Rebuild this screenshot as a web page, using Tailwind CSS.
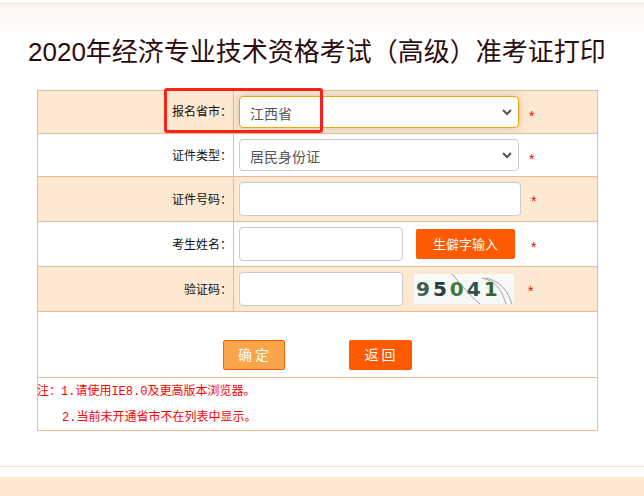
<!DOCTYPE html>
<html lang="zh">
<head>
<meta charset="utf-8">
<script src="https://cdn.jsdelivr.net/npm/@tailwindcss/browser@4"></script>
</head>
<body class="h-[496px] w-[644px] overflow-hidden bg-white font-['Liberation_Sans','Noto_Sans_CJK_SC',sans-serif]">
<div class="h-[34px] border-t border-[#fbe0cc] mt-[3px] bg-gradient-to-b from-[#fff5ee] to-white"></div>
<h1 class="ml-[28px] h-[53px] text-[26px] leading-[30px] whitespace-nowrap text-[#2e0c0c]">2020年经济专业技术资格考试（高级）准考证打印</h1>
<div class="relative ml-[37px] w-[561px] border border-[#efb88e] text-[12px] text-[#111]">
  <div class="flex h-[43px] border-b border-[#efb88e] bg-[#fde9d2]">
    <div class="flex w-[196px] items-center justify-end border-r border-[#efb88e] pr-[1px]">报名省市：</div>
    <div class="flex flex-1 items-center pl-[5px]">
      <div class="flex h-[32px] w-[280px] items-center justify-between rounded-[4px] border border-[#f5a30a] bg-white pl-[10px] pr-[6px] text-[14px] text-[#555] shadow-[0_0_8px_rgba(120,120,120,0.35)]"><span class="mt-[4px]">江西省</span>
        <svg width="10" height="7" viewBox="0 0 10 7"><path d="M1 1l4 4 4-4" fill="none" stroke="#555" stroke-width="2"/></svg>
      </div>
      <span class="ml-[10px] mt-[8px] text-[14px] text-[#f00]">*</span>
    </div>
  </div>
  <div class="flex h-[43px] border-b border-[#efb88e] bg-white">
    <div class="flex w-[196px] items-center justify-end border-r border-[#efb88e] pr-[1px] pt-[1px]">证件类型：</div>
    <div class="flex flex-1 items-center pl-[5px]">
      <div class="flex h-[32px] w-[280px] items-center justify-between rounded-[4px] border border-[#ccc] bg-white pl-[10px] pr-[6px] text-[14px] text-[#555]"><span class="mt-[4px]">居民身份证</span>
        <svg width="10" height="7" viewBox="0 0 10 7"><path d="M1 1l4 4 4-4" fill="none" stroke="#555" stroke-width="2"/></svg>
      </div>
      <span class="ml-[10px] mt-[8px] text-[14px] text-[#f00]">*</span>
    </div>
  </div>
  <div class="flex h-[45px] border-b border-[#efb88e] bg-[#fde9d2]">
    <div class="flex w-[196px] items-center justify-end border-r border-[#efb88e] pr-[1px] pt-[1px]">证件号码：</div>
    <div class="flex flex-1 items-center pl-[5px]">
      <div class="h-[34px] w-[282px] rounded-[4px] border border-[#ccc] bg-white"></div>
      <span class="ml-[10px] mt-[5px] text-[14px] text-[#f00]">*</span>
    </div>
  </div>
  <div class="flex h-[45px] border-b border-[#efb88e] bg-white">
    <div class="flex w-[196px] items-center justify-end border-r border-[#efb88e] pr-[1px] pt-[1px]">考生姓名：</div>
    <div class="flex flex-1 items-center pl-[5px]">
      <div class="h-[34px] w-[164px] rounded-[4px] border border-[#ccc] bg-white"></div>
      <div class="ml-[13px] flex h-[30px] w-[99px] items-center justify-center rounded-[2px] bg-[#ff5a00] pt-[1px] text-[13px] text-white">生僻字输入</div>
      <span class="ml-[16px] mt-[6px] text-[14px] text-[#f00]">*</span>
    </div>
  </div>
  <div class="flex h-[45px] border-b border-[#efb88e] bg-[#fde9d2]">
    <div class="flex w-[196px] items-center justify-end border-r border-[#efb88e] pr-[1px] pt-[1px]">验证码：</div>
    <div class="flex flex-1 items-center pl-[5px]">
      <div class="h-[34px] w-[164px] rounded-[4px] border border-[#ccc] bg-white"></div>
      <div class="relative ml-[11px] flex h-[30px] w-[100px] items-center overflow-hidden bg-[#f6f9f6] pl-[2px] font-['DejaVu_Sans',sans-serif] text-[20px] font-bold tracking-[3px]">
        <span class="text-[#3d5f56]">9</span><span class="text-[#2b3b3a]">5</span><span class="text-[#3f7a45]">0</span><span class="text-[#2f5050]">4</span><span class="text-[#35662f]">1</span>
        <svg class="absolute inset-0" width="100" height="30" viewBox="0 0 100 30"><path d="M38 0C48 12 56 22 66 30M68 4C84 8 88 18 92 30M72 4C88 8 94 18 98 30" fill="none" stroke="#888" stroke-width="0.8"/></svg>
      </div>
      <span class="ml-[14px] mt-[5px] text-[14px] text-[#f00]">*</span>
    </div>
  </div>
  <div class="flex h-[66px] items-start border-b border-[#efb88e] bg-white pl-[185px] pt-[28px]">
    <div class="flex h-[30px] w-[62px] items-center justify-center rounded-[2px] border border-[#ff5a00] bg-[#f9a64b] pl-[2px] text-[14px] tracking-[3px] text-white">确定</div>
    <div class="ml-[64px] flex h-[30px] w-[63px] items-center justify-center rounded-[2px] bg-[#ff5a00] pl-[2px] text-[14px] tracking-[3px] text-white">返回</div>
  </div>
  <div class="h-[52px] bg-white pt-[1px] font-['Liberation_Mono','Noto_Sans_CJK_SC',monospace] text-[12px] leading-[26px] text-[#f00]">
    <div class="-ml-px whitespace-nowrap">注：1.请使用IE8.0及更高版本浏览器。</div>
    <div class="whitespace-nowrap pl-[24px]">2.当前未开通省市不在列表中显示。</div>
  </div>
  <div class="absolute left-[126px] top-[-3px] h-[45px] w-[159px] rounded-[3px] border-[3px] border-[#fb2318]"></div>
</div>
<div class="mt-[35px] h-[11px] border-t border-[#fbe3c9] bg-white"></div>
<div class="h-[19px] bg-[#fde9d2]"></div>
</body>
</html>
